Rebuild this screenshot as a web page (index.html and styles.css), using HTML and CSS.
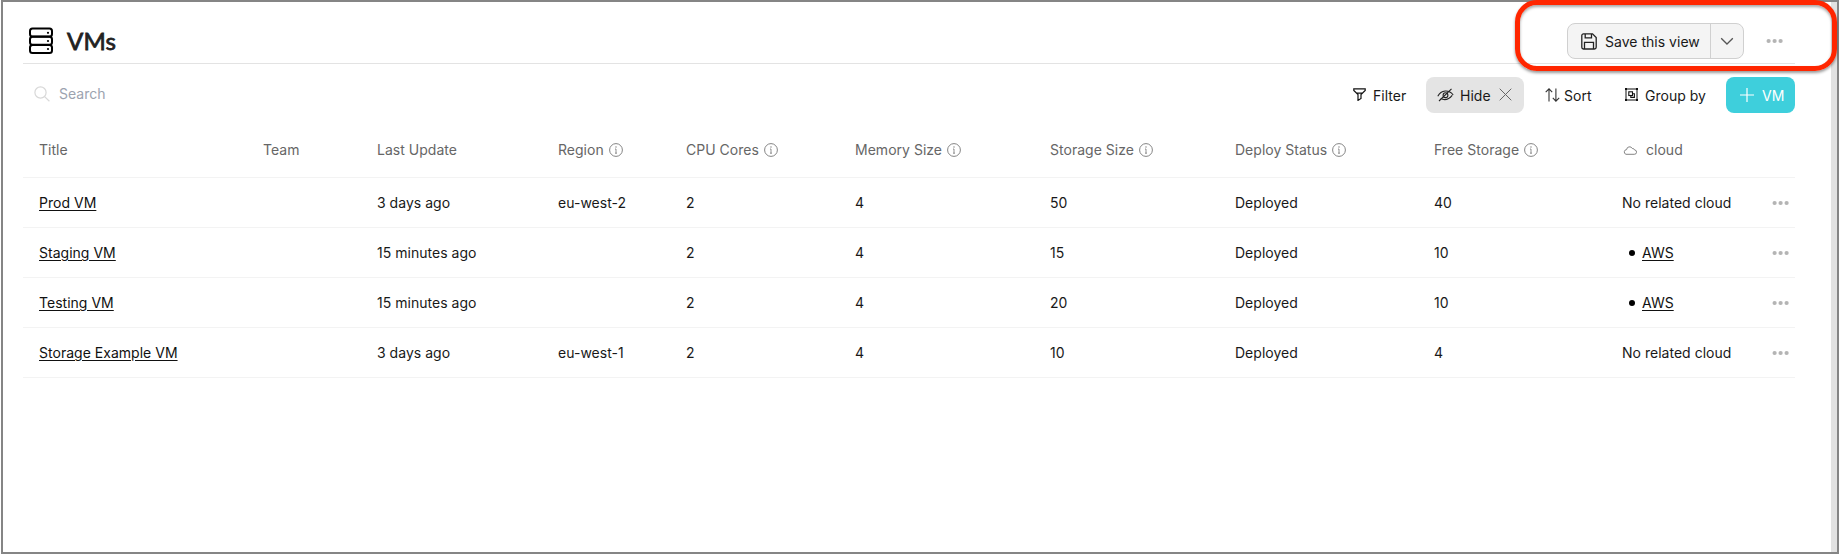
FILE: index.html
```html
<!DOCTYPE html>
<html lang="en">
<head>
<meta charset="utf-8">
<title>VMs</title>
<link rel="stylesheet" href="styles.css">
</head>
<body>
<svg class="defs" width="0" height="0">
  <symbol id="info" viewBox="0 0 14 14"><circle cx="7" cy="7" r="6.4" fill="none" stroke="currentColor" stroke-width=".9"/><path d="M7 6v4.2M6 10.2h2M6 6h1" fill="none" stroke="currentColor" stroke-width=".8"/><circle cx="7" cy="4" r=".65" fill="currentColor"/></symbol>
  <symbol id="dots" viewBox="0 0 18 6"><g fill="currentColor"><circle cx="2.6" cy="3" r="2.1"/><circle cx="8.6" cy="3" r="2.1"/><circle cx="14.6" cy="3" r="2.1"/></g></symbol>
</svg>
<div class="frame">
  <main class="content">
    <header class="header">
      <svg class="server" viewBox="0 0 26 28" fill="none" stroke="#000" stroke-width="2"><rect x="2" y="1.5" width="22" height="8" rx="2.5"/><rect x="2" y="9.8" width="22" height="8" rx="2.5"/><rect x="2" y="18" width="22" height="8" rx="2.5"/><g fill="#000" stroke="none"><circle cx="20" cy="5.8" r="1.1"/><circle cx="20" cy="14" r="1.1"/><circle cx="20" cy="22" r="1.1"/></g></svg>
      <h1 class="title">VMs</h1>
      <div class="split">
        <button class="save"><svg width="16" height="17" viewBox="0 0 16 17" fill="none" stroke="#222" stroke-width="1.3"><path d="M2.5.9h9l3.7 3.7v9.6a1.8 1.8 0 0 1-1.8 1.8H2.5A1.8 1.8 0 0 1 .8 14.2V2.6A1.7 1.7 0 0 1 2.5.9z"/><path d="M4.2 1v3.8h6.300V1M3.500 16V9.300h9V16"/></svg><span>Save this view</span></button>
        <button class="caret"><svg width="14" height="9" viewBox="0 0 14 9" fill="none" stroke="#555" stroke-width="1.3"><path d="M1.200 1.200 7 7l5.800-5.800"/></svg></button>
      </div>
      <svg class="dots header-dots"><use href="#dots"/></svg>
    </header>
    <div class="toolbar">
      <label class="search"><svg width="16" height="16" viewBox="0 0 16 16" fill="none" stroke="#d8d8d8" stroke-width="1.2"><circle cx="6.5" cy="6.5" r="5.6"/><path d="m10.6 10.6 4.800 4.600"/></svg><span>Search</span></label>
      <div class="tools">
        <button class="tool filter"><svg width="13" height="13" viewBox="0 0 13 13" fill="none" stroke="#111" stroke-width="1.2"><path d="M.8.8h11.4v1.700L8 6.500v3.900l-3 2V6.500L.8 2.500zM3 5.200h7"/></svg><span>Filter</span></button>
        <button class="tool hide"><svg width="17" height="14" viewBox="0 0 17 14" fill="none" stroke="#222" stroke-width="1.1"><path d="M.8 8.300C4.200 1.800 11.800 1.300 16.200 7M3.500 10.600c4 1.800 8.400.9 11.700-3.200M2 13 14.500.8"/><circle cx="8.500" cy="7.200" r="2.400"/></svg><span>Hide</span><svg class="close" width="13" height="13" viewBox="0 0 13 13" stroke="#666" stroke-width="1"><path d="m.7.7 11.600 11.600M12.300.7.7 12.300"/></svg></button>
        <button class="tool sort"><svg width="15" height="14" viewBox="0 0 15 14" fill="none" stroke="#333" stroke-width="1.1"><path d="M4 13.500V.9M.7 4.200 4 .9l3.200 3.300M10.900.5v12.600M7.800 9.800l3.100 3.300 3.300-3.300"/></svg><span>Sort</span></button>
        <button class="tool group"><svg width="13" height="13" viewBox="0 0 13 13" fill="none" stroke="#111"><rect x="1" y="1" width="11" height="11"/><rect x="3.800" y="3.800" width="3.700" height="3.700" stroke-width="1.1"/><path d="M7.500 5.800h1.900v3.600H5.800V7.500" stroke-width="1.1"/><path fill="#111" stroke="none" d="M0 0h2v2H0zM11 0h2v2h-2zM0 11h2v2H0zM11 11h2v2h-2z"/></svg><span>Group by</span></button>
        <button class="tool add"><svg width="14" height="14" viewBox="0 0 14 14" stroke="#fff" stroke-width="1.2"><path d="M7 0v14M0 7h14"/></svg><span>VM</span></button>
      </div>
    </div>
    <table class="table">
      <colgroup><col class="c-title"><col class="c-team"><col class="c-update"><col class="c-region"><col class="c-cpu"><col class="c-mem"><col class="c-storage"><col class="c-status"><col class="c-free"><col class="c-cloud"><col class="c-menu"></colgroup>
      <thead><tr>
        <th>Title</th><th>Team</th><th>Last Update</th>
        <th>Region<svg class="info"><use href="#info"/></svg></th>
        <th>CPU Cores<svg class="info"><use href="#info"/></svg></th>
        <th>Memory Size<svg class="info"><use href="#info"/></svg></th>
        <th>Storage Size<svg class="info"><use href="#info"/></svg></th>
        <th>Deploy Status<svg class="info"><use href="#info"/></svg></th>
        <th>Free Storage<svg class="info"><use href="#info"/></svg></th>
        <th><svg class="cloud" viewBox="0 0 14 10" fill="none" stroke="#777" stroke-width=".9"><path d="M3 9.300h8.200a2.200 2.200 0 0 0 .3-4.400A2 2 0 0 0 9.300 3.500 3 3 0 0 0 3.600 4.600 2.400 2.400 0 0 0 3 9.300z"/></svg>cloud</th><th></th>
      </tr></thead>
      <tbody>
        <tr><td><a class="link">Prod VM</a></td><td></td><td>3 days ago</td><td>eu-west-2</td><td>2</td><td>4</td><td>50</td><td>Deployed</td><td>40</td><td>No related cloud</td><td><svg class="dots"><use href="#dots"/></svg></td></tr>
        <tr><td><a class="link">Staging VM</a></td><td></td><td>15 minutes ago</td><td></td><td>2</td><td>4</td><td>15</td><td>Deployed</td><td>10</td><td><span class="related"><a class="link">AWS</a></span></td><td><svg class="dots"><use href="#dots"/></svg></td></tr>
        <tr><td><a class="link">Testing VM</a></td><td></td><td>15 minutes ago</td><td></td><td>2</td><td>4</td><td>20</td><td>Deployed</td><td>10</td><td><span class="related"><a class="link">AWS</a></span></td><td><svg class="dots"><use href="#dots"/></svg></td></tr>
        <tr><td><a class="link">Storage Example VM</a></td><td></td><td>3 days ago</td><td>eu-west-1</td><td>2</td><td>4</td><td>10</td><td>Deployed</td><td>4</td><td>No related cloud</td><td><svg class="dots"><use href="#dots"/></svg></td></tr>
      </tbody>
    </table>
  </main>
  <div class="scrollbar"></div>
</div>
<div class="highlight"></div>
</body>
</html>
```
FILE: styles.css
```css
* { box-sizing: border-box; }
body { margin: 0; background: #fff; color: #191919; font: 14px/20px Inter, "Liberation Sans", sans-serif; letter-spacing: .02px; overflow: hidden; }
svg { display: block; flex: none; }
.defs { position: absolute; }
button { font: inherit; letter-spacing: inherit; color: inherit; border: 0; background: none; padding: 0; margin: 0; display: flex; align-items: center; }
.frame { height: 554px; margin-left: 1px; border: 2px solid #858585; display: flex; }
.content { flex: 1; padding: 0 36px 0 20px; }
.scrollbar { width: 6px; background: #e2e2e2; }
.header { height: 62px; border-bottom: 1px solid #e3e3e3; display: flex; align-items: flex-start; padding: 21px 11px 0 5px; }
.server { width: 26px; height: 28px; margin-top: 4px; }
.title { margin: 3px 0 0 13px; font: 400 24px/30px Lato, sans-serif; letter-spacing: .2px; color: #222; -webkit-text-stroke: .8px #222; }
.split { margin-left: auto; width: 177px; height: 36px; display: flex; border: 1px solid #d0d0d0; border-radius: 8px; background: #f4f4f4; }
.save { width: 143px; padding: 2px 0 0 13px; gap: 8px; border-right: 1px solid #d0d0d0; }
.save svg { margin-top: -2px; }
.caret { flex: 1; justify-content: center; }
.dots { width: 18px; height: 6px; color: #b4b4b4; }
.header-dots { margin: 15px 0 0 22px; }
.toolbar { height: 49px; padding-top: 13px; display: flex; justify-content: space-between; }
.search { display: flex; gap: 9px; height: 34px; align-items: center; padding-left: 11px; color: #9ca3af; }
.tools { display: flex; }
.tool { height: 36px; border-radius: 8px; padding-top: 1px; }
.tool svg { margin-top: -2px; }
.filter { gap: 7px; width: 73px; }
.hide { background: #e4e4e4; width: 98px; padding-left: 11px; gap: 6px; }
.close { margin-left: 2px; }
.sort { margin-left: 21px; width: 80px; gap: 4px; }
.group { width: 101px; gap: 7px; }
.add { background: #3ecfdc; color: #fff; width: 69px; padding-left: 14px; gap: 8px; }
.table { width: 1772px; table-layout: fixed; border-collapse: collapse; }
.table th, .table td { text-align: left; padding: 0 0 0 16px; border-bottom: 1px solid #f3f3f3; white-space: nowrap; font-weight: 400; }
.table th { height: 64px; padding-top: 11px; color: #666; }
.table td { height: 50px; padding-top: 2px; }
.table td:last-child { padding-left: 17px; }
.info { display: inline-block; width: 14px; height: 14px; vertical-align: -2px; margin-left: 5px; color: #777; }
.cloud { display: inline-block; width: 14px; height: 10px; margin: 0 9px 0 1px; vertical-align: 0; }
.c-title { width: 224px; }
.c-team { width: 114px; }
.c-update { width: 181px; }
.c-region { width: 128px; }
.c-cpu { width: 169px; }
.c-mem { width: 195px; }
.c-storage { width: 185px; }
.c-status { width: 199px; }
.c-free { width: 188px; }
.c-cloud { width: 149px; }
.c-menu { width: 40px; }
.link { color: #111; text-decoration: underline; text-underline-offset: 2px; }
.related { display: flex; align-items: center; gap: 7px; padding-left: 7px; }
.related::before { content: ""; width: 6px; height: 6px; border-radius: 50%; background: #000; }
.highlight { position: absolute; left: 1515px; top: 0; width: 322px; height: 71px; border: 5px solid #ff2600; border-radius: 22px; box-shadow: 0 2px 3px rgba(0,0,0,.4), inset 0 2px 3px rgba(0,0,0,.35); }
```
